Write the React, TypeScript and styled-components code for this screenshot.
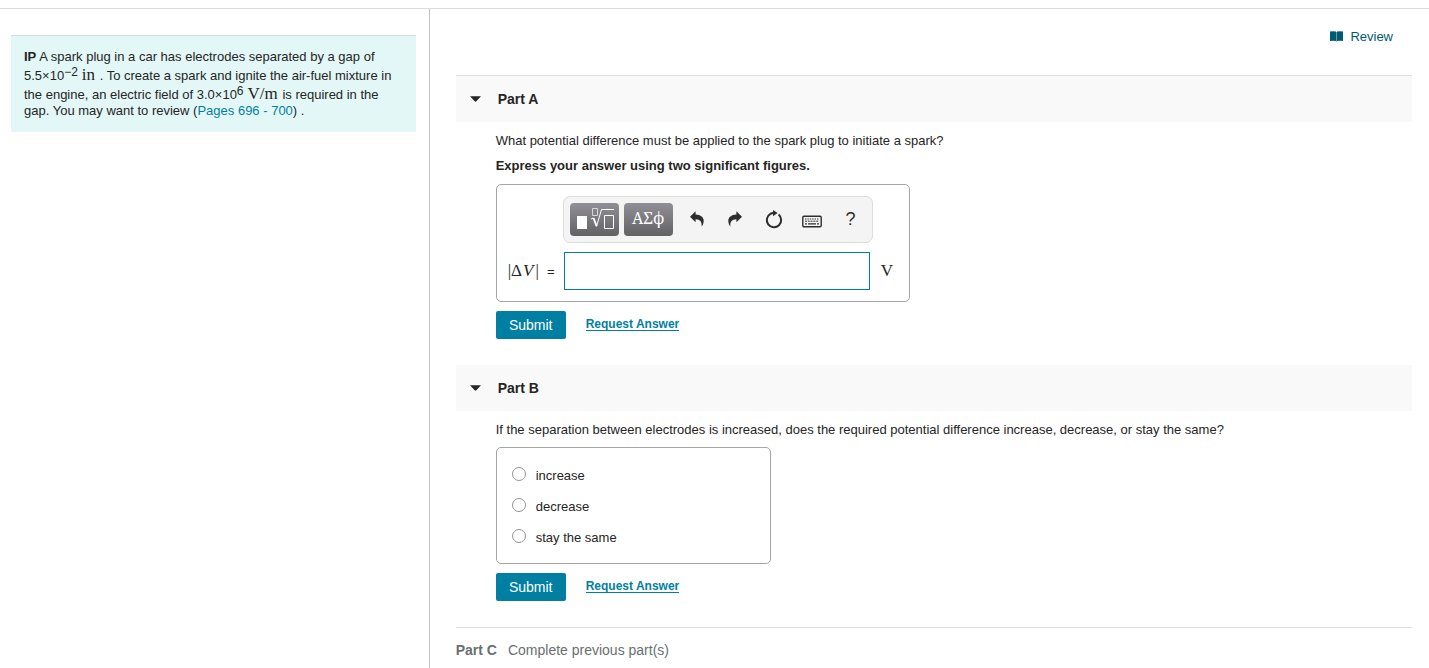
import React from "react";
import styled, { createGlobalStyle } from "styled-components";

const GlobalStyle = createGlobalStyle`
  * { box-sizing: border-box; }
  body {
    margin: 0;
    background: #ffffff;
    color: #252525;
    font-family: "Liberation Sans", Arial, sans-serif;
    font-size: 13px;
    line-height: 16px;
  }
  p, h2 { margin: 0; }
  button, input { font-family: inherit; }
`;

const Page = styled.div`
  display: flex;
  min-height: calc(100vh - 8px);
  margin-top: 8px;
  border-top: 1px solid #dcdcdc;
`;

const Sidebar = styled.aside`
  flex: 0 0 30%;
  padding: 26px 13px 26px 11px;
`;

const Intro = styled.p`
  padding: 13px;
  border-top: 1px solid #d3dcdc;
  background: #e3f7f6;
`;

const PagesLink = styled.a`
  color: #007fa3;
  text-decoration: none;
`;

const Serif = styled.span<{ $unit?: boolean }>`
  font-family: "Liberation Serif", "Times New Roman", serif;
  font-size: 17px;
  line-height: 16px;
  margin: ${(p) => (p.$unit ? "0 1px 0 4px" : "0")};
`;

const Variable = styled.i`
  margin: 0 2px 0 1px;
`;

const Quantity = styled.span`
  display: inline-block;
  padding-top: 2px;
  line-height: 16px;
  white-space: nowrap;
`;

const Power = styled.sup`
  font-size: 12px;
  line-height: 1px;
  vertical-align: 4px;
`;

const Main = styled.main`
  flex: 1;
  min-width: 0;
  padding: 20px 17px 0 26px;
  border-left: 1px solid #bcc3cb;
`;

const TopBar = styled.div`
  display: flex;
  justify-content: flex-end;
  padding: 0 19px 30px 0;
`;

const ReviewLink = styled.a`
  display: flex;
  align-items: center;
  gap: 7px;
  color: #005a70;
  text-decoration: none;
  svg { margin-bottom: 2px; }
`;

const PartHeader = styled.button<{ $ruled?: boolean }>`
  display: flex;
  align-items: center;
  gap: 17px;
  width: 100%;
  padding: 15px 14px;
  border: 0;
  border-top: ${(p) => (p.$ruled ? "1px solid #dcdfdf" : "0")};
  background: #f9f9f9;
  color: #252525;
  font-size: 14px;
  font-weight: bold;
  line-height: 16px;
  text-align: left;
`;

const PartBody = styled.div`
  display: flex;
  flex-direction: column;
  align-items: flex-start;
  gap: 9px;
  padding: 11px 0 26px 40px;
`;

const Instruction = styled.p`
  padding-bottom: 1px;
  font-weight: bold;
`;

const AnswerBox = styled.div`
  display: grid;
  grid-template-columns: 47px 310px auto;
  column-gap: 8px;
  row-gap: 9px;
  align-items: center;
  padding: 11px 16px 11px 11px;
  border: 1px solid #a5a5a5;
  border-radius: 5px;
`;

const Toolbar = styled.div`
  grid-column: 2;
  display: flex;
  align-items: center;
  height: 47px;
  padding: 0 2px 0 6px;
  border: 1px solid #dcdcdc;
  border-radius: 7px;
  background: #f4f4f4;
`;

const PaletteButton = styled.button`
  flex: none;
  display: flex;
  align-items: center;
  justify-content: center;
  width: 49px;
  height: 33px;
  margin-right: 5px;
  padding: 0 0 4px;
  border: 0;
  border-radius: 4px;
  background: linear-gradient(#918f96, #626264);
  color: #ffffff;
  font-family: "Noto Serif", "DejaVu Serif", serif;
  font-size: 16px;
  line-height: 20px;
`;

const ToolButton = styled.button`
  flex: 1;
  display: flex;
  align-items: center;
  justify-content: center;
  height: 33px;
  padding: 0;
  border: 0;
  background: none;
  color: #2d2d2d;
  font-size: 18px;
`;

const AnswerLabel = styled.label`
  grid-column: 1;
  display: flex;
  align-items: baseline;
  justify-content: space-between;
  white-space: nowrap;
`;

const AnswerInput = styled.input`
  height: 38px;
  margin: 0 3px 0 1px;
  padding: 0 8px;
  border: 1px solid #007fa3;
  border-radius: 0;
  background: #ffffff;
  font-size: 16px;
  outline: none;
`;

const Actions = styled.div`
  display: flex;
  align-items: center;
  gap: 20px;
`;

const SubmitButton = styled.button`
  min-width: 70px;
  height: 28px;
  padding: 0 12px;
  border: 0;
  border-radius: 2px;
  background: #007fa3;
  color: #ffffff;
  font-size: 14px;
`;

const RequestLink = styled.a`
  margin-bottom: 2px;
  border-bottom: 1px solid #007fa3;
  color: #007fa3;
  font-size: 12px;
  font-weight: bold;
  line-height: 12px;
  text-decoration: none;
`;

const Choices = styled.div`
  width: 275px;
  padding: 12px 15px 10px;
  border: 1px solid #a5a5a5;
  border-radius: 5px;
`;

const Choice = styled.label`
  display: flex;
  align-items: center;
  gap: 10px;
  height: 31px;
`;

const Radio = styled.input`
  appearance: none;
  width: 14px;
  height: 14px;
  margin: 0 0 4px;
  border: 1px solid #949494;
  border-radius: 50%;
  background: #ffffff;
  &:checked { border: 4px solid #007fa3; }
`;

const LockedPart = styled.div`
  display: flex;
  gap: 11px;
  padding: 14px 0 9px;
  border-top: 1px solid #dcdcdc;
  color: #6a7070;
  font-size: 14px;
`;

const BookIcon = () => (
  <svg width="13" height="11" viewBox="0 0 13 11" aria-hidden="true">
    <path d="M0 .6Q3 0 6 .6V10Q3 9.4 0 10ZM7 .6Q10 0 13 .6V10Q10 9.4 7 10Z" fill="#005a70" />
    <path d="M6.5 1V10.5" stroke="#6b9eac" />
  </svg>
);

const CaretIcon = () => (
  <svg width="11" height="6" viewBox="0 0 11 6" aria-hidden="true">
    <path d="M0 .3H11L6.3 5.3Q5.5 6 4.7 5.3Z" fill="#252525" />
  </svg>
);

const TemplateIcon = () => (
  <svg width="39" height="25" viewBox="0 -1 39 25" fill="none" stroke="#ffffff" aria-hidden="true">
    <path d="M2 10H12V23H2Z" fill="#ffffff" stroke="none" />
    <path d="M17.5 2.5H22.5V9.5H17.5Z" stroke="#d8d8da" />
    <path d="M16 13L18.5 12" />
    <path d="M18.5 12L21.5 20" strokeWidth="2" />
    <path d="M21.5 20.5L26.5 3.5H39" />
    <path d="M29.5 9.5H38.5V22.5H29.5Z" />
  </svg>
);

const ArrowIcon = ({ forward }: { forward?: boolean }) => (
  <svg width="14" height="17" viewBox="0 0 14 17" aria-hidden="true">
    <path
      d={
        forward
          ? "M14 5.7L8.4 .3V3.4C3.2 3.7 .3 6.2 .3 9.7C.3 12.4 1.3 14.2 2.4 15.6C2 11 3.5 8.4 8.4 8.3V11.3Z"
          : "M0 5.7L5.6 .3V3.4C10.8 3.7 13.7 6.2 13.7 9.7C13.7 12.4 12.7 14.2 11.6 15.6C12 11 10.5 8.4 5.6 8.3V11.3Z"
      }
      fill="currentColor"
    />
  </svg>
);

const ResetIcon = () => (
  <svg width="18" height="19" viewBox="0 0 18 19" aria-hidden="true">
    <path d="M13.6 4.5A7.2 7.2 0 1 1 5.4 3.8L9 2.8" fill="none" stroke="currentColor" strokeWidth="2" />
    <path d="M8 0L12.6 2.9L8 6.2Z" fill="currentColor" />
  </svg>
);

const KeyboardIcon = () => (
  <svg width="20" height="16" viewBox="0 0 20 16" fill="none" stroke="currentColor" aria-hidden="true">
    <rect x=".8" y="4.2" width="18.4" height="10.6" rx="1.2" strokeWidth="1.4" />
    <path d="M3 7H17" strokeDasharray="1.4 1" />
    <path d="M3 9.2H17" strokeDasharray="2 .8" />
    <path d="M3 11.8H5M6 11.8H14M15 11.8H17" strokeWidth="1.3" />
  </svg>
);

export default function App() {
  return (
    <>
      <GlobalStyle />
      <Page>
        <Sidebar>
          <Intro>
            <b>IP</b> A spark plug in a car has electrodes separated by a gap of{" "}
            <Quantity>
              5.5×10<Power>−2</Power>
              <Serif $unit>in</Serif>
            </Quantity>{" "}
            . To create a spark and ignite the air-fuel mixture in the engine, an electric field of{" "}
            <Quantity>
              3.0×10<Power>6</Power>
              <Serif $unit>V/m</Serif>
            </Quantity>{" "}
            is required in the gap. You may want to review (<PagesLink href="#pages">Pages 696 - 700</PagesLink>) .
          </Intro>
        </Sidebar>
        <Main>
          <TopBar>
            <ReviewLink href="#review">
              <BookIcon />
              Review
            </ReviewLink>
          </TopBar>

          <section>
            <h2>
              <PartHeader type="button" aria-expanded="true" $ruled>
                <CaretIcon />
                Part A
              </PartHeader>
            </h2>
            <PartBody>
              <p>What potential difference must be applied to the spark plug to initiate a spark?</p>
              <Instruction>Express your answer using two significant figures.</Instruction>
              <AnswerBox>
                <Toolbar>
                  <PaletteButton type="button" aria-label="Templates">
                    <TemplateIcon />
                  </PaletteButton>
                  <PaletteButton type="button">ΑΣϕ</PaletteButton>
                  <ToolButton type="button" aria-label="Undo">
                    <ArrowIcon />
                  </ToolButton>
                  <ToolButton type="button" aria-label="Redo">
                    <ArrowIcon forward />
                  </ToolButton>
                  <ToolButton type="button" aria-label="Reset">
                    <ResetIcon />
                  </ToolButton>
                  <ToolButton type="button" aria-label="Keyboard shortcuts">
                    <KeyboardIcon />
                  </ToolButton>
                  <ToolButton type="button">?</ToolButton>
                </Toolbar>
                <AnswerLabel htmlFor="answer-a">
                  <Serif>
                    |Δ<Variable>V</Variable>|
                  </Serif>
                  <span>=</span>
                </AnswerLabel>
                <AnswerInput id="answer-a" type="text" />
                <Serif>V</Serif>
              </AnswerBox>
              <Actions>
                <SubmitButton type="button">Submit</SubmitButton>
                <RequestLink href="#request-a">Request Answer</RequestLink>
              </Actions>
            </PartBody>
          </section>

          <section>
            <h2>
              <PartHeader type="button" aria-expanded="true">
                <CaretIcon />
                Part B
              </PartHeader>
            </h2>
            <PartBody>
              <p>
                If the separation between electrodes is increased, does the required potential difference increase,
                decrease, or stay the same?
              </p>
              <Choices role="radiogroup">
                {["increase", "decrease", "stay the same"].map((text) => (
                  <Choice key={text}>
                    <Radio type="radio" name="answer-b" value={text} />
                    {text}
                  </Choice>
                ))}
              </Choices>
              <Actions>
                <SubmitButton type="button">Submit</SubmitButton>
                <RequestLink href="#request-b">Request Answer</RequestLink>
              </Actions>
            </PartBody>
          </section>

          <LockedPart>
            <b>Part C</b>
            <span>Complete previous part(s)</span>
          </LockedPart>
        </Main>
      </Page>
    </>
  );
}
